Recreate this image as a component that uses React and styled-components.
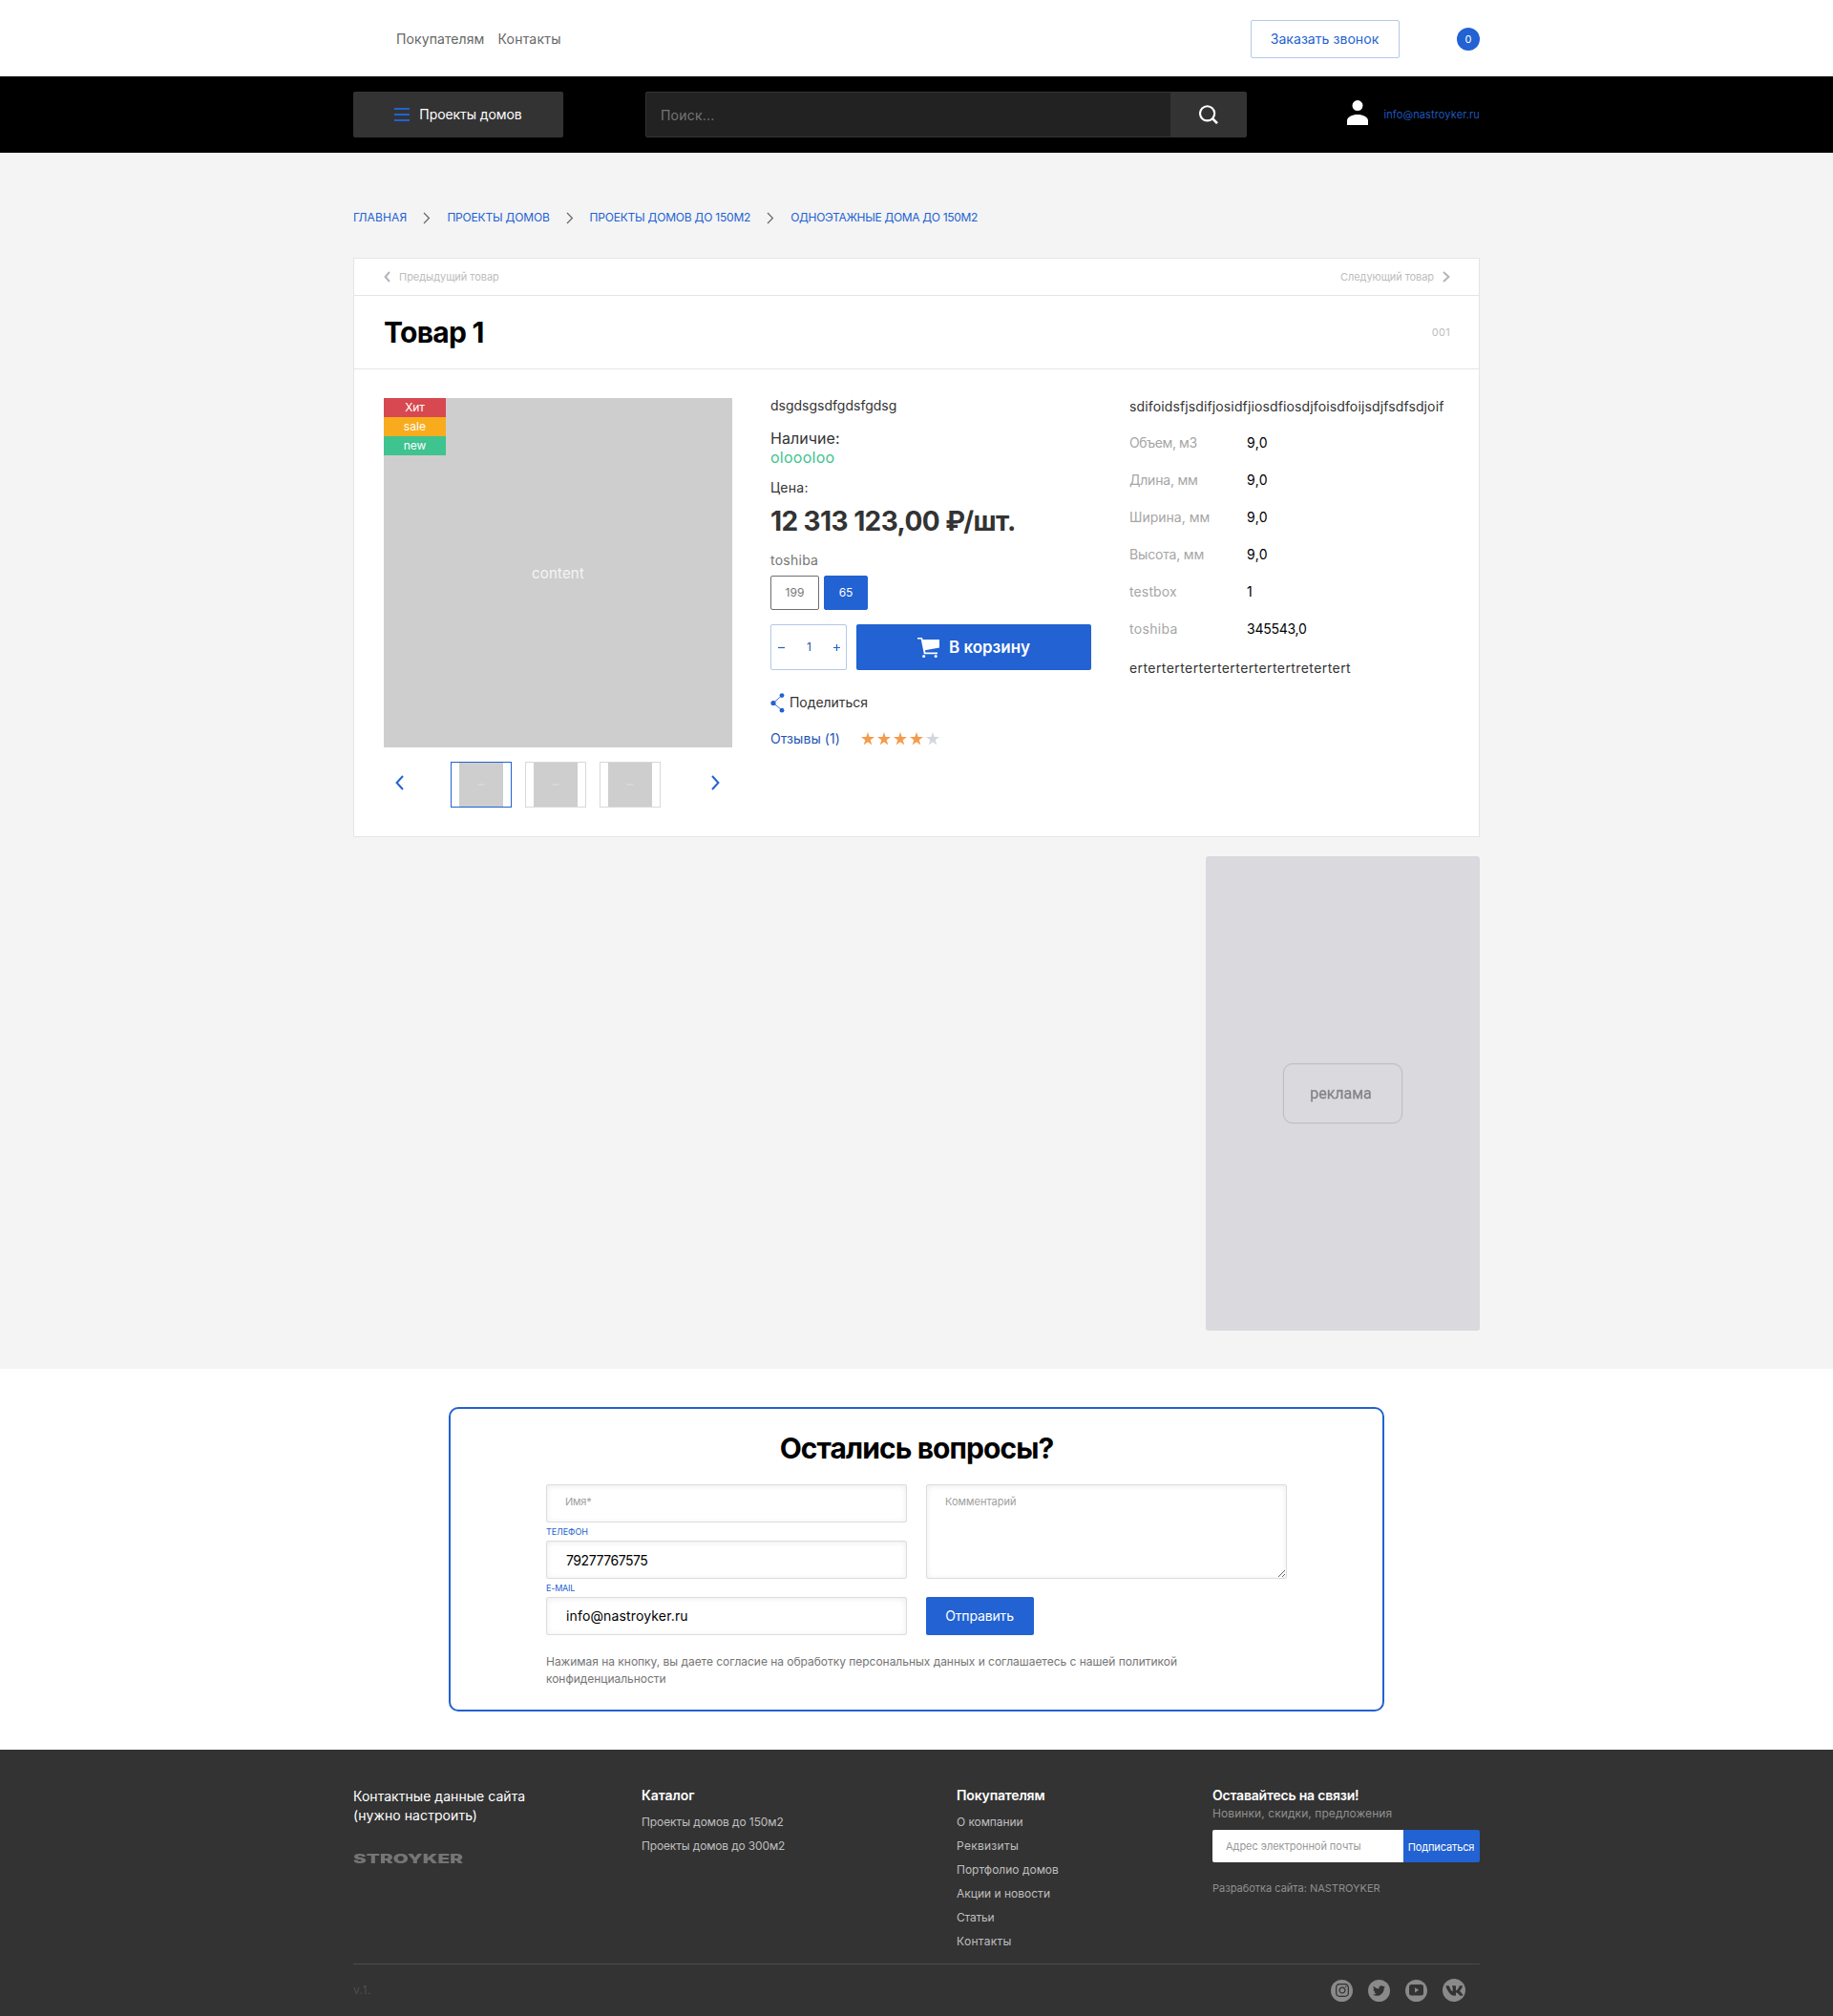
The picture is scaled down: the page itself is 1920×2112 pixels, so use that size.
import React from 'react';
import styled, { createGlobalStyle } from 'styled-components';
import { FaInstagram, FaTwitter, FaVk } from 'react-icons/fa';

const blue = '#2262d2';

const GlobalStyle = createGlobalStyle`
  * { box-sizing: border-box; }
  body { margin: 0; background: #fff; font-family: Inter, "Liberation Sans", sans-serif; color: #333; }
  input, textarea, button { font-family: inherit; margin: 0; }
`;

const Text = styled.div`
  font-size: ${(p) => p.$size || 14}px;
  line-height: ${(p) => p.$line || 20}px;
  font-weight: ${(p) => p.$weight || 400};
  letter-spacing: ${(p) => p.$track || 0}px;
  color: ${(p) => p.$color || '#333'};
  margin-top: ${(p) => p.$top || 0}px;
  white-space: nowrap;
`;

const Container = styled.div`
  width: 1180px;
  margin: 0 auto;
`;

/* Header */
const TopBar = styled(Container)`
  height: 80px;
  padding: 2px 0 0 45px;
  display: flex;
  align-items: center;
`;
const TopNav = styled.nav`
  display: flex;
  gap: 14px;
  margin-right: auto;
`;
const CallButton = styled.button`
  width: 156px;
  height: 40px;
  padding: 0 1px 2px 0;
  background: #fff;
  border: 1px solid #b3c8eb;
  border-radius: 2px;
  color: ${blue};
  font-size: 14px;
  letter-spacing: 0.06px;
  margin-right: 60px;
`;
const CartCount = styled.div`
  width: 24px;
  height: 24px;
  border-radius: 50%;
  background: ${blue};
  color: #fff;
  font-size: 11px;
  line-height: 24px;
  text-align: center;
`;
const BlackBar = styled.div`
  background: #000;
`;
const BlackInner = styled(Container)`
  height: 80px;
  display: flex;
  align-items: center;
`;
const MenuButton = styled.button`
  width: 220px;
  height: 48px;
  border: 0;
  border-radius: 2px;
  background: #333;
  display: flex;
  align-items: center;
  justify-content: center;
  gap: 10px;
  padding: 0;
`;
const MenuLabel = styled(Text)`
  padding-bottom: 1px;
`;
const Burger = styled.span`
  width: 16px;
  height: 14px;
  display: flex;
  flex-direction: column;
  justify-content: space-between;
  &::before, &::after, i { content: ''; height: 2px; background: ${blue}; }
`;
const Search = styled.form`
  width: 630px;
  height: 48px;
  margin-left: 86px;
  display: flex;
  border: 1px solid #333;
  border-radius: 2px;
  overflow: hidden;
  background: #333;
`;
const SearchInput = styled.input`
  flex: 1;
  border: 0;
  background: #222;
  padding: 1px 14px 0 15px;
  font-size: 14px;
  letter-spacing: 0.2px;
  color: #fff;
  &::placeholder { color: #757575; opacity: 1; }
`;
const SearchButton = styled.button`
  width: 79px;
  border: 0;
  background: #333;
  padding: 0 0 1px;
  display: flex;
  align-items: center;
  justify-content: center;
`;
const Account = styled.div`
  margin-left: auto;
  display: flex;
  align-items: center;
  gap: 16px;
  svg { margin-bottom: 4px; }
`;

/* Product */
const Main = styled.main`
  background: #f4f4f4;
  padding: 58px 0 40px;
`;
const Crumbs = styled.nav`
  display: flex;
  align-items: center;
  gap: 17px;
  height: 20px;
  margin-bottom: 32px;
`;
const Card = styled.section`
  background: #fff;
  border: 1px solid #e4e5e7;
`;
const CardRow = styled.div`
  height: ${(p) => p.$height}px;
  padding: 0 30px 0 31px;
  border-bottom: 1px solid #e4e5e7;
  display: flex;
  align-items: center;
  justify-content: space-between;
`;
const Neighbour = styled.a`
  display: flex;
  align-items: center;
  gap: 9px;
`;
const CardBody = styled.div`
  padding: 30px 30px 30px 31px;
  display: grid;
  grid-template-columns: 365px 336px 336px;
  column-gap: 40px;
`;
const Photo = styled.div`
  position: relative;
  height: 366px;
  background: #cecece;
  display: flex;
  align-items: center;
  justify-content: center;
`;
const Badges = styled.div`
  position: absolute;
  top: 0;
  left: 0;
  width: 65px;
`;
const Badge = styled(Text)`
  background: ${(p) => p.$bg};
  text-align: center;
`;
const Thumbs = styled.div`
  display: flex;
  align-items: center;
  margin-top: 15px;
  padding-left: 12px;
  > svg { margin-bottom: 4px; }
`;
const ThumbList = styled.div`
  display: flex;
  gap: 14px;
  margin: 0 53px 0 49px;
`;
const Thumb = styled.div`
  width: 64px;
  height: 48px;
  background: #fff;
  border: 1px solid ${(p) => (p.$active ? blue : '#d8d8d8')};
  display: flex;
  justify-content: center;
`;
const ThumbImage = styled.div`
  width: 46px;
  background: #cecece;
  color: #e6e6e6;
  font-size: 2px;
  line-height: 46px;
  text-align: center;
`;
const Info = styled.div`
  margin-top: -2px;
`;
const Options = styled.div`
  display: flex;
  gap: 5px;
  margin-top: 6px;
`;
const Option = styled.button`
  width: ${(p) => (p.$active ? 46 : 51)}px;
  height: 36px;
  padding: 0 0 1px;
  border-radius: 2px;
  border: 1px solid ${(p) => (p.$active ? blue : '#6f6f6f')};
  background: ${(p) => (p.$active ? blue : '#fff')};
  color: ${(p) => (p.$active ? '#fff' : '#757575')};
  font-size: 12px;
`;
const Buy = styled.div`
  display: flex;
  gap: 10px;
  margin-top: 15px;
`;
const Quantity = styled.div`
  width: 80px;
  height: 48px;
  border: 1px solid #b3c8eb;
  border-radius: 2px;
  display: flex;
  align-items: center;
  justify-content: space-between;
  padding: 0 6px 0 7px;
`;
const BuyButton = styled.button`
  flex: 1;
  border: 0;
  border-radius: 2px;
  background: ${blue};
  display: flex;
  align-items: center;
  justify-content: center;
  gap: 10px;
  padding: 0;
`;
const Share = styled.div`
  display: flex;
  align-items: center;
  gap: 5px;
  height: 22px;
  margin-top: 23px;
`;
const Reviews = styled.div`
  display: flex;
  align-items: center;
  margin-top: 17px;
`;
const Stars = styled.div`
  display: flex;
  gap: 3px;
  margin-left: 22px;
`;
const Specs = styled.div`
  margin-top: -1px;
`;
const SpecList = styled.div`
  margin-top: 8px;
`;
const Spec = styled.div`
  height: 39px;
  display: grid;
  grid-template-columns: 123px 1fr;
  align-items: center;
`;
const Ad = styled.aside`
  width: 287px;
  height: 497px;
  margin: 20px 0 0 auto;
  border-radius: 3px;
  background: #d9d9de;
  display: flex;
  align-items: center;
  justify-content: center;
`;
const AdLabel = styled.div`
  width: 125px;
  height: 63px;
  padding: 1px 4px 0 0;
  border: 1px solid #bebec0;
  border-radius: 10px;
  box-shadow: 0 0 1px #c4c4c6;
  display: flex;
  align-items: center;
  justify-content: center;
  font: 16px/20px Roboto, sans-serif;
  color: #858587;
  span { filter: blur(0.4px); -webkit-text-stroke: 0.3px #858587; }
`;

/* Questions form */
const Questions = styled.section`
  padding: 40px 0;
`;
const QuestionsBox = styled.form`
  width: 980px;
  height: 319px;
  margin: 0 auto;
  border: 2px solid ${blue};
  border-radius: 10px;
  padding: 23px 100px 0;
`;
const Heading = styled(Text)`
  text-align: center;
`;
const Fields = styled.div`
  display: grid;
  grid-template-columns: 378px 378px;
  column-gap: 20px;
  margin-top: 20px;
`;
const Input = styled.input`
  display: block;
  width: 100%;
  height: 40px;
  border: 1px solid #dcdcdc;
  border-radius: 2px;
  box-shadow: inset 0 1px 6px rgba(0, 0, 0, 0.08);
  background: #fff;
  padding: 0 20px ${(p) => p.$lift || 0}px ${(p) => p.$left || 20}px;
  font-size: ${(p) => p.$size || 14}px;
  letter-spacing: ${(p) => p.$track || 0}px;
  color: #000;
  &::placeholder { color: #a0a0a0; opacity: 1; }
`;
const Comment = styled.textarea`
  display: block;
  width: 100%;
  height: 99px;
  border: 1px solid #dcdcdc;
  border-radius: 2px;
  box-shadow: inset 0 1px 6px rgba(0, 0, 0, 0.08);
  background: #fff;
  padding: 10px 19px;
  font-size: 11px;
  line-height: 14px;
  &::placeholder { color: #a0a0a0; opacity: 1; }
`;
const Submit = styled.button`
  width: 113px;
  height: 40px;
  margin-top: 19px;
  padding: 0 1px 1px 0;
  border: 0;
  border-radius: 2px;
  background: ${blue};
  color: #fff;
  font-size: 14px;
  letter-spacing: -0.15px;
`;
const Agreement = styled(Text)`
  width: 680px;
  white-space: normal;
`;

/* Footer */
const Footer = styled.footer`
  background: #333;
  height: 279px;
  padding-top: 38px;
`;
const FooterColumns = styled(Container)`
  height: 186px;
  display: grid;
  grid-template-columns: 302px 330px 268px 280px;
`;
const Logo = styled(Text)`
  transform: scaleX(1.59);
  transform-origin: left center;
`;
const Links = styled.div`
  margin-top: 5px;
`;
const Subscribe = styled.form`
  display: flex;
  height: 34px;
  margin-top: 8px;
`;
const SubscribeInput = styled.input`
  width: 200px;
  border: 0;
  border-radius: 2px 0 0 2px;
  background: #fff;
  padding: 0 14px;
  font-size: 11px;
  letter-spacing: -0.05px;
  &::placeholder { color: #999; opacity: 1; }
`;
const SubscribeButton = styled.button`
  width: 80px;
  border: 0;
  border-radius: 0 2px 2px 0;
  padding: 2px 1px 0 0;
  background: ${blue};
  color: #fff;
  font-size: 11px;
  letter-spacing: -0.14px;
`;
const FooterBottom = styled(Container)`
  height: 55px;
  border-top: 1px solid #4b4b4b;
  padding-right: 15px;
  display: flex;
  align-items: center;
  justify-content: space-between;
`;
const Socials = styled.div`
  display: flex;
  align-items: center;
  gap: 16px;
`;
const Social = styled.a`
  width: ${(p) => p.$size || 23}px;
  height: ${(p) => p.$size || 23}px;
  border-radius: 50%;
  background: #8a8a8a;
  color: #333;
  display: flex;
  align-items: center;
  justify-content: center;
`;

const Chevron = ({ w, h, color, stroke = 2, left }) => (
  <svg width={w} height={h} viewBox={`0 0 ${w} ${h}`} fill="none" stroke={color} strokeWidth={stroke}>
    <path d={left ? `M${w - 1} 1L1.6 ${h / 2}L${w - 1} ${h - 1}` : `M1 1L${w - 1.6} ${h / 2}L1 ${h - 1}`} />
  </svg>
);

const Star = ({ color }) => (
  <svg width="14" height="14" viewBox="0 0 14 14" fill={color}>
    <path d="M7 0l1.7 5H14L9.7 8.2l1.6 5.3L7 10.3l-4.3 3.2 1.6-5.3L0 5h5.3z" />
  </svg>
);

const crumbs = [
  ['ГЛАВНАЯ', 0.15],
  ['ПРОЕКТЫ ДОМОВ', -0.19],
  ['ПРОЕКТЫ ДОМОВ ДО 150М2', -0.21],
  ['ОДНОЭТАЖНЫЕ ДОМА ДО 150М2', -0.33],
];
const specs = [
  ['Объем, м3', -0.4, '9,0', 0.4],
  ['Длина, мм', -0.21, '9,0', 0.4],
  ['Ширина, мм', 0, '9,0', 0.4],
  ['Высота, мм', -0.17, '9,0', 0.4],
  ['testbox', 0.13, '1', 0],
  ['toshiba', 0.3, '345543,0', -0.25],
];
const buyerLinks = [
  ['О компании', -0.08],
  ['Реквизиты', 0.28],
  ['Портфолио домов', 0],
  ['Акции и новости', 0],
  ['Статьи', -0.2],
  ['Контакты', 0.3],
];

export default function App() {
  return (
    <>
      <GlobalStyle />
      <header>
        <TopBar>
          <TopNav>
            <Text $color="#666" $track={0.1}>Покупателям</Text>
            <Text $color="#666" $track={0.2}>Контакты</Text>
          </TopNav>
          <CallButton>Заказать звонок</CallButton>
          <CartCount>0</CartCount>
        </TopBar>
        <BlackBar>
          <BlackInner>
            <MenuButton>
              <Burger><i /></Burger>
              <MenuLabel $color="#fff" $track={-0.08}>Проекты домов</MenuLabel>
            </MenuButton>
            <Search>
              <SearchInput placeholder="Поиск..." />
              <SearchButton type="button">
                <svg width="20" height="20" viewBox="0 0 20 20" fill="none" stroke="#fff" strokeWidth="2.1">
                  <circle cx="8.6" cy="8.8" r="7.6" />
                  <path d="M14 14.2l5 5" strokeWidth="2.6" />
                </svg>
              </SearchButton>
            </Search>
            <Account>
              <svg width="22" height="26" viewBox="0 0 22 26" fill="#fff">
                <circle cx="11" cy="5.6" r="5.5" />
                <path d="M0 26v-4.500C0 17.500 5.500 15 11 15s11 2.500 11 6.500V26z" />
              </svg>
              <Text $size={11} $color="#1f58bd" $track={0.13}>info@nastroyker.ru</Text>
            </Account>
          </BlackInner>
        </BlackBar>
      </header>

      <Main>
        <Container>
          <Crumbs>
            {crumbs.map(([label, track], i) => (
              <React.Fragment key={label}>
                {i > 0 && <Chevron w={8} h={13} color="#666" stroke={1.2} />}
                <Text $size={12} $color={blue} $track={track}>{label}</Text>
              </React.Fragment>
            ))}
          </Crumbs>
          <Card>
            <CardRow $height={39}>
              <Neighbour>
                <Chevron w={7} h={12} color="#b5b5b5" left />
                <Text $size={11} $color="#bdbdbd" $track={-0.04}>Предыдущий товар</Text>
              </Neighbour>
              <Neighbour>
                <Text $size={11} $color="#bdbdbd" $track={-0.08}>Следующий товар</Text>
                <Chevron w={8} h={12} color="#b5b5b5" />
              </Neighbour>
            </CardRow>
            <CardRow $height={77}>
              <Text $size={30} $line={36} $weight={700} $color="#000" $track={-0.7}>Товар 1</Text>
              <Text $size={11} $color="#bdbdbd" $track={0.3}>001</Text>
            </CardRow>
            <CardBody>
              <div>
                <Photo>
                  <Badges>
                    <Badge $size={12} $color="#fff" $bg="#d84851" $track={-0.2}>Хит</Badge>
                    <Badge $size={12} $color="#fff" $bg="#f8ac1d" $track={0.1}>sale</Badge>
                    <Badge $size={12} $color="#fff" $bg="#3fc38f" $track={-0.1}>new</Badge>
                  </Badges>
                  <Text $size={15} $top={1} $color="#f4f4f4" $track={0.18}>content</Text>
                </Photo>
                <Thumbs>
                  <Chevron w={9} h={16} color={blue} left />
                  <ThumbList>
                    <Thumb $active><ThumbImage>content</ThumbImage></Thumb>
                    <Thumb><ThumbImage>content</ThumbImage></Thumb>
                    <Thumb><ThumbImage>content</ThumbImage></Thumb>
                  </ThumbList>
                  <Chevron w={9} h={16} color={blue} />
                </Thumbs>
              </div>

              <Info>
                <Text>dsgdsgsdfgdsfgdsg</Text>
                <Text $size={16} $top={14} $track={0.05}>Наличие:</Text>
                <Text $size={16} $color="#3fc38f" $track={0.25}>oloooloo</Text>
                <Text $top={12} $track={0.25}>Цена:</Text>
                <Text $size={28} $line={36} $top={7} $weight={700} $track={-0.58}>12 313 123,00 ₽/шт.</Text>
                <Text $top={13} $color="#757575" $track={0.25}>toshiba</Text>
                <Options>
                  <Option>199</Option>
                  <Option $active>65</Option>
                </Options>
                <Buy>
                  <Quantity>
                    <svg width="7" height="7" viewBox="0 0 7 7" stroke={blue} strokeWidth="1.2"><path d="M0 3.500h7" /></svg>
                    <Text $size={12} $color="#1f55b5">1</Text>
                    <svg width="7" height="7" viewBox="0 0 7 7" stroke={blue} strokeWidth="1.2"><path d="M0 3.500h7M3.500 0v7" /></svg>
                  </Quantity>
                  <BuyButton>
                    <svg width="23" height="21" viewBox="0 0 23 21" fill="#fff">
                      <path d="M0 0h5l.6 2H23v8.600L7.900 13.300l.5 2.300H21v1.600H6.900L3.700 1.600H0z" />
                      <circle cx="6.700" cy="19.500" r="1.500" />
                      <circle cx="19.200" cy="19.500" r="1.500" />
                    </svg>
                    <Text $size={17} $weight={600} $color="#fff" $track={-0.03}>В корзину</Text>
                  </BuyButton>
                </Buy>
                <Share>
                  <svg width="15" height="21" viewBox="0 0 15 21" fill={blue}>
                    <path d="M12 2.500L3 10.500l9 7.500" fill="none" stroke={blue} strokeWidth="0.900" />
                    <circle cx="3" cy="10.500" r="2.600" />
                    <circle cx="12" cy="2.600" r="2.400" />
                    <circle cx="12" cy="18.200" r="2.400" />
                  </svg>
                  <Text $track={-0.05}>Поделиться</Text>
                </Share>
                <Reviews>
                  <Text $color="#1f55b5" $track={0.05}>Отзывы (1)</Text>
                  <Stars>
                    {[1, 2, 3, 4, 5].map((n) => <Star key={n} color={n < 5 ? '#f49b4c' : '#d3d6dc'} />)}
                  </Stars>
                </Reviews>
              </Info>

              <Specs>
                <Text $track={0.13}>sdifoidsfjsdifjosidfjiosdfiosdjfoisdfoijsdjfsdfsdjoif</Text>
                <SpecList>
                  {specs.map(([name, nameTrack, value, valueTrack]) => (
                    <Spec key={name}>
                      <Text $color="#a6a6a6" $track={nameTrack}>{name}</Text>
                      <Text $color="#000" $track={valueTrack}>{value}</Text>
                    </Spec>
                  ))}
                </SpecList>
                <Text $top={12} $track={0.42}>ertertertertertertertertertretertert</Text>
              </Specs>
            </CardBody>
          </Card>
          <Ad><AdLabel><span>реклама</span></AdLabel></Ad>
        </Container>
      </Main>

      <Questions>
        <QuestionsBox>
          <Heading $size={30} $line={36} $weight={700} $color="#000" $track={-0.92}>Остались вопросы?</Heading>
          <Fields>
            <div>
              <Input placeholder="Имя*" $size={11} $lift={4} $left={19} $track={-0.2} />
              <Text $size={9} $line={19} $color={blue} $track={-0.07}>ТЕЛЕФОН</Text>
              <Input defaultValue="79277767575" $track={-0.45} />
              <Text $size={9} $line={19} $color={blue} $track={-0.2}>E-MAIL</Text>
              <Input defaultValue="info@nastroyker.ru" $lift={1} $track={0.15} />
            </div>
            <div>
              <Comment placeholder="Комментарий" />
              <Submit type="button">Отправить</Submit>
            </div>
          </Fields>
          <Agreement $size={12} $line={18} $top={19} $color="#757575" $track={-0.03}>
            Нажимая на кнопку, вы даете согласие на обработку персональных данных и соглашаетесь с нашей политикой конфиденциальности
          </Agreement>
        </QuestionsBox>
      </Questions>

      <Footer>
        <FooterColumns>
          <div>
            <Text $color="#fff" $top={1} $track={0.04}>Контактные данные сайта</Text>
            <Text $color="#fff" $track={0.08}>(нужно настроить)</Text>
            <Logo $size={13} $weight={900} $top={25} $color="#757575">STROYKER</Logo>
          </div>
          <div>
            <Text $weight={600} $color="#fff" $track={-0.05}>Каталог</Text>
            <Links>
              <Text $size={12} $line={25} $color="#bfbfbf" $track={-0.09}>Проекты домов до 150м2</Text>
              <Text $size={12} $line={25} $color="#bfbfbf" $track={-0.15}>Проекты домов до 300м2</Text>
            </Links>
          </div>
          <div>
            <Text $weight={600} $color="#fff" $track={-0.15}>Покупателям</Text>
            <Links>
              {buyerLinks.map(([label, track]) => (
                <Text key={label} $size={12} $line={25} $color="#bfbfbf" $track={track}>{label}</Text>
              ))}
            </Links>
          </div>
          <div>
            <Text $weight={600} $color="#fff" $track={-0.2}>Оставайтесь на связи!</Text>
            <Text $size={12} $line={18} $color="#8f8f8f" $track={0.08}>Новинки, скидки, предложения</Text>
            <Subscribe>
              <SubscribeInput placeholder="Адрес электронной почты" />
              <SubscribeButton type="button">Подписаться</SubscribeButton>
            </Subscribe>
            <Text $size={11} $line={18} $top={18} $color="#8f8f8f">Разработка сайта: NASTROYKER</Text>
          </div>
        </FooterColumns>
        <FooterBottom>
          <Text $size={12} $color="#4f4f4f" $track={0.4}>v.1.</Text>
          <Socials>
            <Social><FaInstagram size={16} /></Social>
            <Social><FaTwitter size={13} /></Social>
            <Social>
              <svg width="15" height="12" viewBox="0 0 15 12" fill="#333">
                <path fillRule="evenodd" d="M2.500 0h10A2.500 2.500 0 0 1 15 2.500v6.500a2.500 2.500 0 0 1-2.500 2.500h-10A2.500 2.500 0 0 1 0 9V2.500A2.500 2.500 0 0 1 2.500 0zM6 3.200v5.200l4.200-2.600z" />
              </svg>
            </Social>
            <Social $size={24}><FaVk size={19} /></Social>
          </Socials>
        </FooterBottom>
      </Footer>
    </>
  );
}
